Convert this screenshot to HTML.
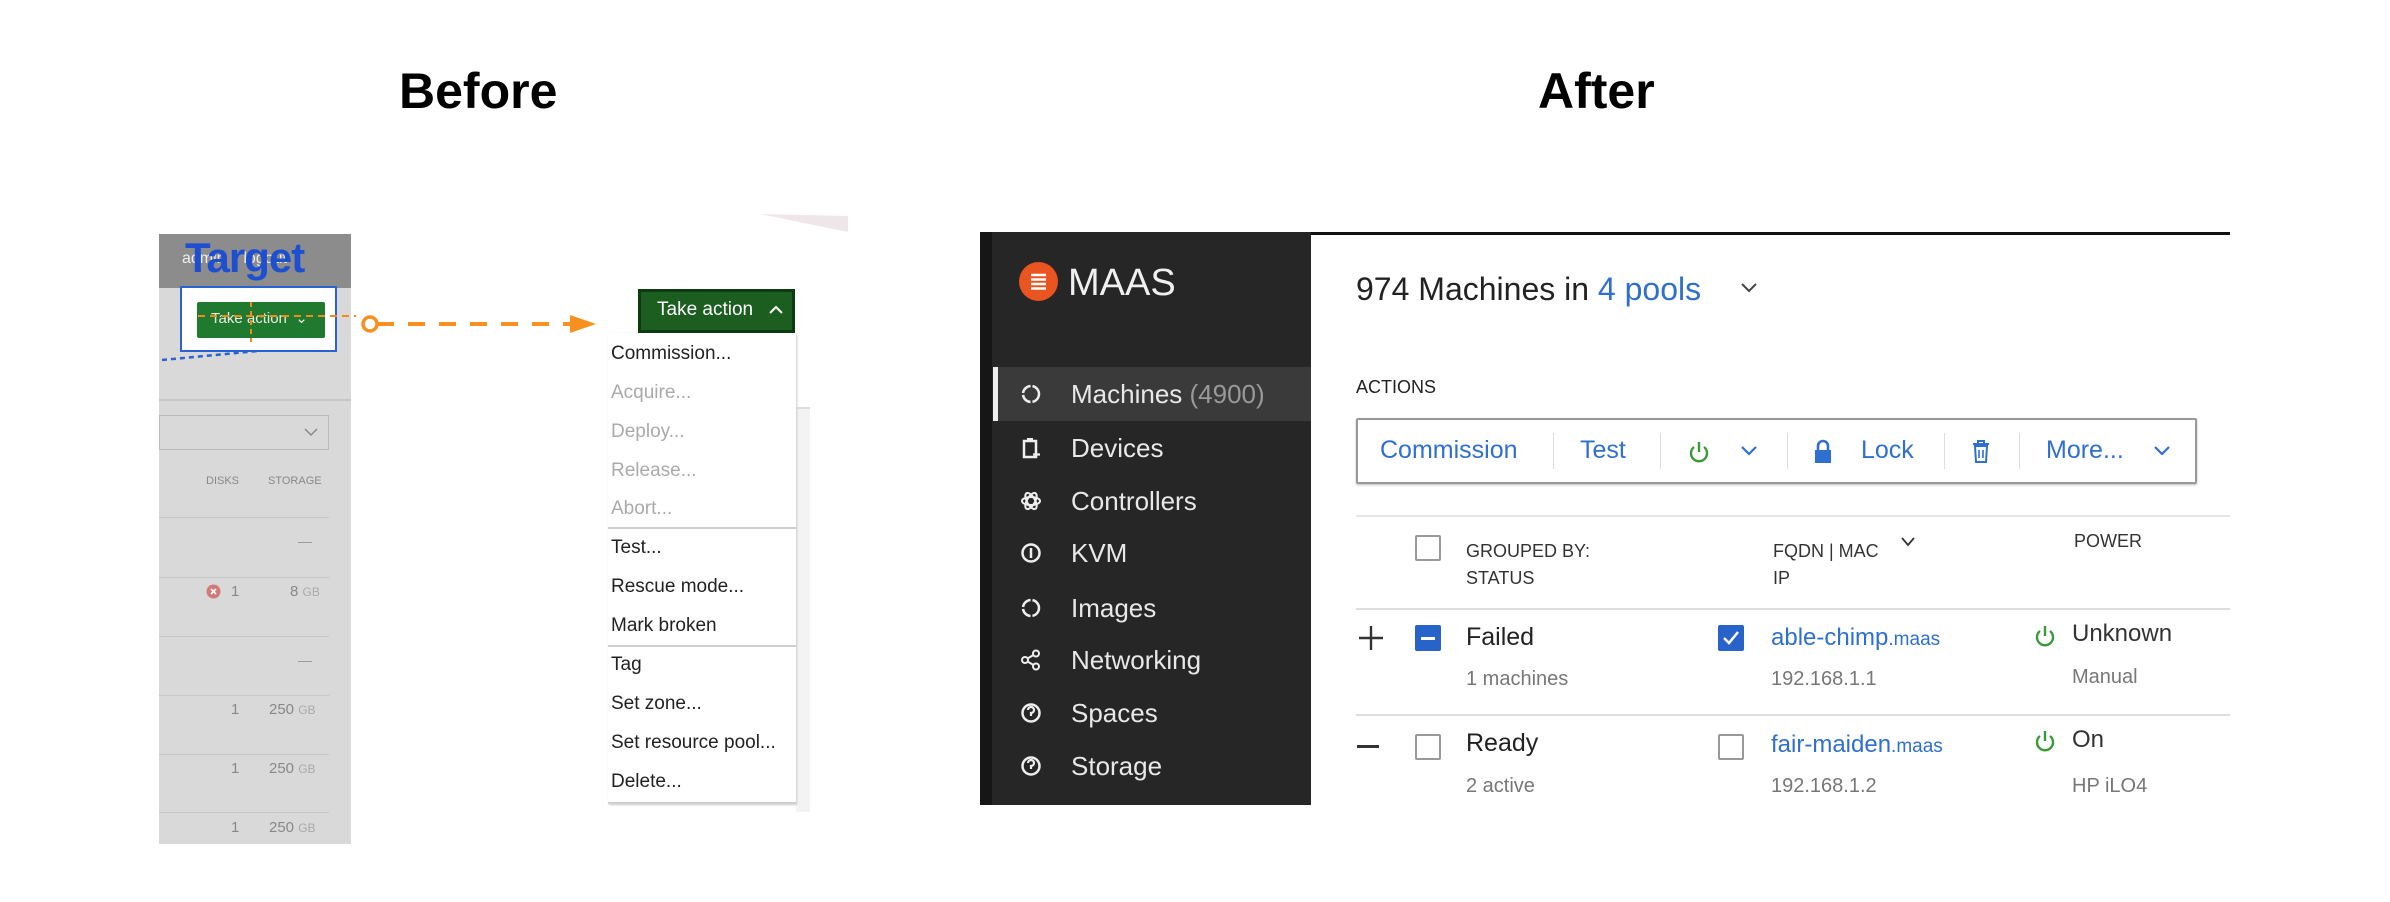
<!DOCTYPE html>
<html><head><meta charset="utf-8"><style>
*{margin:0;padding:0;box-sizing:border-box}
body{width:2390px;height:902px;background:#fff;position:relative;overflow:hidden;font-family:"Liberation Sans",sans-serif}
.a{position:absolute;white-space:nowrap}
.t{font-weight:bold;font-size:50px;color:#000}
.mi{left:611px;font-size:19px;color:#222}
.mi.d{color:#aaa}
.hr{position:absolute;height:2px;background:#cfcfcf}
.nav{left:1071px;font-size:26px;color:#e8e8e8}
.ic{position:absolute;left:1020px;width:22px;height:22px}
.bl{color:#2f6fd0}
.gy{color:#777}
.sep{position:absolute;top:433px;width:1px;height:36px;background:#ddd}
.cb{position:absolute;width:26px;height:26px;border:2px solid #999;border-radius:2px;background:#fff}
</style></head><body>

<div class="a t" style="left:399px;top:62px">Before</div>
<div class="a t" style="left:1538px;top:62px">After</div>

<svg class="a" style="left:760px;top:214px" width="90" height="20"><polygon points="0,0 88,2 88,18" fill="#efe6ea"/></svg>
<div class="a" style="left:159px;top:234px;width:192px;height:610px;background:#d9d9d9"></div>
<div class="a" style="left:159px;top:234px;width:192px;height:54px;background:#8c8c8c"></div>
<div class="a" style="left:182px;top:250px;font-size:16px;color:#eee">admin&nbsp;&nbsp;&nbsp;&nbsp;logout</div>
<div class="a" style="left:185px;top:234px;font-size:42px;font-weight:bold;color:#1f4fd1;letter-spacing:-1px">Target</div>
<div class="a" style="left:159px;top:399px;width:192px;height:2px;background:#c6c6c6"></div>
<div class="a" style="left:159px;top:415px;width:170px;height:35px;border:1px solid #bbb"></div>
<svg class="a" style="left:303px;top:426px" width="16" height="12"><path d="M2 3l6 6 6-6" stroke="#888" stroke-width="1.5" fill="none"/></svg>
<div class="a" style="left:206px;top:475px;font-size:11px;color:#888">DISKS</div>
<div class="a" style="left:268px;top:475px;font-size:11px;color:#888">STORAGE</div>
<div class="hr" style="left:159px;top:517px;width:170px;height:1px;background:#c8c8c8"></div>
<div class="hr" style="left:159px;top:577px;width:170px;height:1px;background:#c8c8c8"></div>
<div class="hr" style="left:159px;top:636px;width:170px;height:1px;background:#c8c8c8"></div>
<div class="hr" style="left:159px;top:695px;width:170px;height:1px;background:#c8c8c8"></div>
<div class="hr" style="left:159px;top:754px;width:170px;height:1px;background:#c8c8c8"></div>
<div class="hr" style="left:159px;top:812px;width:170px;height:1px;background:#c8c8c8"></div>
<div class="a" style="left:298px;top:533px;font-size:14px;color:#999">—</div>
<div class="a" style="left:298px;top:652px;font-size:14px;color:#999">—</div>
<svg class="a" style="left:206px;top:584px" width="15" height="15"><circle cx="7.5" cy="7.5" r="7" fill="#d07a7a"/><path d="M5 5l5 5M10 5l-5 5" stroke="#fff" stroke-width="1.6"/></svg>
<div class="a" style="left:231px;top:583px;font-size:15px;color:#888">1</div>
<div class="a" style="left:290px;top:583px;font-size:15px;color:#888">8 <span style="font-size:12px;color:#aaa">GB</span></div>
<div class="a" style="left:231px;top:701px;font-size:15px;color:#888">1</div>
<div class="a" style="left:269px;top:701px;font-size:15px;color:#888">250 <span style="font-size:12px;color:#aaa">GB</span></div>
<div class="a" style="left:231px;top:760px;font-size:15px;color:#888">1</div>
<div class="a" style="left:269px;top:760px;font-size:15px;color:#888">250 <span style="font-size:12px;color:#aaa">GB</span></div>
<div class="a" style="left:231px;top:819px;font-size:15px;color:#888">1</div>
<div class="a" style="left:269px;top:819px;font-size:15px;color:#888">250 <span style="font-size:12px;color:#aaa">GB</span></div>

<div class="a" style="left:180px;top:286px;width:157px;height:66px;background:#fff;border:2px solid #2a62d0"></div>
<div class="a" style="left:197px;top:302px;width:128px;height:36px;background:#1f7a30;border-radius:2px"></div>
<div class="a" style="left:211px;top:309px;font-size:15px;color:#e8f0e0">Take action &nbsp;⌄</div>
<svg class="a" style="left:160px;top:296px" width="200" height="70">
<path d="M38 20H196" stroke="#f28a1e" stroke-width="2" stroke-dasharray="7 5"/>
<path d="M91 6V46" stroke="#f28a1e" stroke-width="2" stroke-dasharray="5 4"/>
<path d="M2 64L98 55" stroke="#2a62d0" stroke-width="2.5" stroke-dasharray="5 4"/>
</svg>

<svg class="a" style="left:360px;top:312px" width="240" height="26">
<circle cx="10" cy="12" r="7" fill="none" stroke="#f7901e" stroke-width="3.5"/>
<path d="M17 12H215" stroke="#f7901e" stroke-width="4" stroke-dasharray="17 14"/>
<polygon points="210,3 236,12 210,21" fill="#f7901e"/>
</svg>

<div class="a" style="left:796px;top:408px;width:14px;height:404px;background:#f3f3f3"></div>
<div class="a" style="left:755px;top:407px;width:55px;height:2px;background:#ddd"></div>
<div class="a" style="left:608px;top:333px;width:188px;height:471px;background:#fff;box-shadow:1px 1px 2px #ccc"></div>
<div class="a" style="left:638px;top:289px;width:157px;height:44px;background:#1b5e20;border:3px solid #0d3b10"></div>
<div class="a" style="left:657px;top:299px;font-size:19px;color:#fff">Take action</div>
<svg class="a" style="left:768px;top:304px" width="16" height="12"><path d="M2 9l6-6 6 6" stroke="#fff" stroke-width="2" fill="none"/></svg>
<div class="a mi" style="top:343px">Commission...</div>
<div class="a mi d" style="top:382px">Acquire...</div>
<div class="a mi d" style="top:421px">Deploy...</div>
<div class="a mi d" style="top:460px">Release...</div>
<div class="a mi d" style="top:498px">Abort...</div>
<div class="hr" style="left:608px;top:527px;width:188px"></div>
<div class="a mi" style="top:537px">Test...</div>
<div class="a mi" style="top:576px">Rescue mode...</div>
<div class="a mi" style="top:615px">Mark broken</div>
<div class="hr" style="left:608px;top:645px;width:188px"></div>
<div class="a mi" style="top:654px">Tag</div>
<div class="a mi" style="top:693px">Set zone...</div>
<div class="a mi" style="top:732px">Set resource pool...</div>
<div class="a mi" style="top:771px">Delete...</div>
<div class="hr" style="left:608px;top:802px;width:188px"></div>

<div class="a" style="left:980px;top:232px;width:1250px;height:3px;background:#111"></div>
<div class="a" style="left:980px;top:232px;width:331px;height:573px;background:#262626"></div>
<div class="a" style="left:980px;top:232px;width:12px;height:573px;background:#161616"></div>
<div class="a" style="left:1019px;top:262px;width:39px;height:39px;border-radius:50%;background:#e95420"></div>
<svg class="a" style="left:1019px;top:262px" width="39" height="39"><path d="M12 13h15M12 17.5h15M12 22h15M12 26.5h15" stroke="#fff" stroke-width="2.4"/></svg>
<div class="a" style="left:1068px;top:262px;font-size:38px;color:#f0f0f0">MAAS</div>
<div class="a" style="left:993px;top:367px;width:318px;height:54px;background:#3a3a3a"></div>
<div class="a" style="left:993px;top:367px;width:5px;height:54px;background:#eee"></div>
<svg class="ic" style="top:383px" viewBox="0 0 22 22"><circle cx="11" cy="11" r="8" fill="none" stroke="#eee" stroke-width="2.5" stroke-dasharray="11 2"/></svg>
<div class="a nav" style="top:379px">Machines <span style="color:#999">(4900)</span></div>
<svg class="ic" style="top:437px" viewBox="0 0 22 22"><rect x="4" y="4" width="12" height="16" fill="none" stroke="#eee" stroke-width="2.5"/><rect x="7" y="1" width="6" height="4" fill="#eee"/><path d="M16 14v7M13 17.5h7" stroke="#eee" stroke-width="2.2"/></svg>
<div class="a nav" style="top:433px">Devices</div>
<svg class="ic" style="top:490px" viewBox="0 0 22 22"><ellipse cx="11" cy="11" rx="9" ry="4" fill="none" stroke="#eee" stroke-width="2"/><ellipse cx="11" cy="11" rx="9" ry="4" fill="none" stroke="#eee" stroke-width="2" transform="rotate(60 11 11)"/><ellipse cx="11" cy="11" rx="9" ry="4" fill="none" stroke="#eee" stroke-width="2" transform="rotate(-60 11 11)"/></svg>
<div class="a nav" style="top:486px">Controllers</div>
<svg class="ic" style="top:542px" viewBox="0 0 22 22"><circle cx="11" cy="11" r="8.5" fill="none" stroke="#eee" stroke-width="2.5"/><path d="M11 6v10" stroke="#eee" stroke-width="2.5"/></svg>
<div class="a nav" style="top:538px">KVM</div>
<svg class="ic" style="top:597px" viewBox="0 0 22 22"><circle cx="11" cy="11" r="8" fill="none" stroke="#eee" stroke-width="2.5" stroke-dasharray="11 2"/></svg>
<div class="a nav" style="top:593px">Images</div>
<svg class="ic" style="top:649px" viewBox="0 0 22 22"><circle cx="5" cy="11" r="3" fill="none" stroke="#eee" stroke-width="2"/><circle cx="16" cy="4.5" r="3" fill="none" stroke="#eee" stroke-width="2"/><circle cx="16" cy="17.5" r="3" fill="none" stroke="#eee" stroke-width="2"/><path d="M7.5 9.5l6-3.5M7.5 12.5l6 3.5" stroke="#eee" stroke-width="2"/></svg>
<div class="a nav" style="top:645px">Networking</div>
<svg class="ic" style="top:702px" viewBox="0 0 22 22"><circle cx="11" cy="11" r="8.5" fill="none" stroke="#eee" stroke-width="2.5"/><path d="M8 8a3 3 0 1 1 3 3v3" stroke="#eee" stroke-width="2.2" fill="none"/></svg>
<div class="a nav" style="top:698px">Spaces</div>
<svg class="ic" style="top:755px" viewBox="0 0 22 22"><circle cx="11" cy="11" r="8.5" fill="none" stroke="#eee" stroke-width="2.5"/><path d="M8 8a3 3 0 1 1 3 3v3" stroke="#eee" stroke-width="2.2" fill="none"/></svg>
<div class="a nav" style="top:751px">Storage</div>

<div class="a" style="left:1356px;top:271px;font-size:32px;color:#222">974 Machines in <span class="bl">4 pools</span></div>
<svg class="a" style="left:1740px;top:281px" width="18" height="14"><path d="M2 3l7 7 7-7" stroke="#444" stroke-width="2" fill="none"/></svg>
<div class="a" style="left:1356px;top:377px;font-size:18px;color:#222">ACTIONS</div>
<div class="a" style="left:1356px;top:418px;width:841px;height:66px;border:2px solid #999;border-radius:2px;box-shadow:0 1px 2px #bbb"></div>
<div class="a bl" style="left:1380px;top:436px;font-size:25px">Commission</div>
<div class="sep" style="left:1553px"></div>
<div class="a bl" style="left:1580px;top:436px;font-size:25px">Test</div>
<div class="sep" style="left:1660px"></div>
<svg class="a" style="left:1688px;top:439px" width="22" height="26"><path d="M6 8a8 8 0 1 0 10 0" stroke="#3a9a3a" stroke-width="2.4" fill="none"/><path d="M11 3v10" stroke="#3a9a3a" stroke-width="2.4"/></svg>
<svg class="a" style="left:1740px;top:444px" width="18" height="14"><path d="M2 3l7 7 7-7" stroke="#2f6fd0" stroke-width="2.2" fill="none"/></svg>
<div class="sep" style="left:1787px"></div>
<svg class="a" style="left:1812px;top:437px" width="22" height="28"><path d="M6 13V9a5 5 0 0 1 10 0v4" stroke="#2f6fd0" stroke-width="2.6" fill="none"/><rect x="3" y="13" width="16" height="13" fill="#2f6fd0"/></svg>
<div class="a bl" style="left:1861px;top:436px;font-size:25px">Lock</div>
<div class="sep" style="left:1944px"></div>
<svg class="a" style="left:1970px;top:437px" width="22" height="28"><path d="M3 7h16M8 7V4h6v3" stroke="#2f6fd0" stroke-width="2" fill="none"/><path d="M5 9h12l-1 16H6z" stroke="#2f6fd0" stroke-width="2" fill="none"/><path d="M9 13v8M13 13v8" stroke="#2f6fd0" stroke-width="1.6"/></svg>
<div class="sep" style="left:2019px"></div>
<div class="a bl" style="left:2046px;top:436px;font-size:25px">More...</div>
<svg class="a" style="left:2153px;top:444px" width="18" height="14"><path d="M2 3l7 7 7-7" stroke="#2f6fd0" stroke-width="2.2" fill="none"/></svg>

<div class="a" style="left:1356px;top:515px;width:874px;height:2px;background:#e6e6e6"></div>
<div class="cb" style="left:1415px;top:535px"></div>
<div class="a" style="left:1466px;top:538px;font-size:18px;color:#333;line-height:27px">GROUPED BY:<br>STATUS</div>
<div class="a" style="left:1773px;top:538px;font-size:18px;color:#333;line-height:27px">FQDN | MAC<br>IP</div>
<svg class="a" style="left:1900px;top:536px" width="16" height="12"><path d="M2 2l6 7 6-7" stroke="#333" stroke-width="1.8" fill="none"/></svg>
<div class="a" style="left:2074px;top:531px;font-size:18px;color:#333">POWER</div>
<div class="a" style="left:1356px;top:608px;width:874px;height:2px;background:#ddd"></div>

<svg class="a" style="left:1358px;top:625px" width="26" height="26"><path d="M13 1v24M1 13h24" stroke="#333" stroke-width="2.4"/></svg>
<div class="a" style="left:1415px;top:625px;width:26px;height:26px;background:#2863c9;border-radius:2px"></div>
<div class="a" style="left:1421px;top:637px;width:14px;height:3px;background:#fff"></div>
<div class="a" style="left:1466px;top:623px;font-size:25px;color:#222">Failed</div>
<div class="a gy" style="left:1466px;top:668px;font-size:20px">1 machines</div>
<div class="a" style="left:1718px;top:625px;width:26px;height:26px;background:#2863c9;border-radius:2px"></div>
<svg class="a" style="left:1718px;top:625px" width="26" height="26"><path d="M6 13l5 5 9-11" stroke="#fff" stroke-width="2.5" fill="none"/></svg>
<div class="a bl" style="left:1771px;top:624px;font-size:24px">able-chimp<span style="font-size:19px">.maas</span></div>
<div class="a gy" style="left:1771px;top:668px;font-size:20px">192.168.1.1</div>
<svg class="a" style="left:2034px;top:623px" width="22" height="26"><path d="M6 8a8 8 0 1 0 10 0" stroke="#3a9a3a" stroke-width="2.4" fill="none"/><path d="M11 3v10" stroke="#3a9a3a" stroke-width="2.4"/></svg>
<div class="a" style="left:2072px;top:620px;font-size:24px;color:#333">Unknown</div>
<div class="a gy" style="left:2072px;top:666px;font-size:20px">Manual</div>
<div class="a" style="left:1356px;top:714px;width:874px;height:2px;background:#ddd"></div>

<div class="a" style="left:1357px;top:745px;width:22px;height:3px;background:#333"></div>
<div class="cb" style="left:1415px;top:734px"></div>
<div class="a" style="left:1466px;top:729px;font-size:25px;color:#222">Ready</div>
<div class="a gy" style="left:1466px;top:775px;font-size:20px">2 active</div>
<div class="cb" style="left:1718px;top:734px"></div>
<div class="a bl" style="left:1771px;top:731px;font-size:24px">fair-maiden<span style="font-size:19px">.maas</span></div>
<div class="a gy" style="left:1771px;top:775px;font-size:20px">192.168.1.2</div>
<svg class="a" style="left:2034px;top:728px" width="22" height="26"><path d="M6 8a8 8 0 1 0 10 0" stroke="#3a9a3a" stroke-width="2.4" fill="none"/><path d="M11 3v10" stroke="#3a9a3a" stroke-width="2.4"/></svg>
<div class="a" style="left:2072px;top:726px;font-size:24px;color:#333">On</div>
<div class="a gy" style="left:2072px;top:775px;font-size:20px">HP iLO4</div>
</body></html>
